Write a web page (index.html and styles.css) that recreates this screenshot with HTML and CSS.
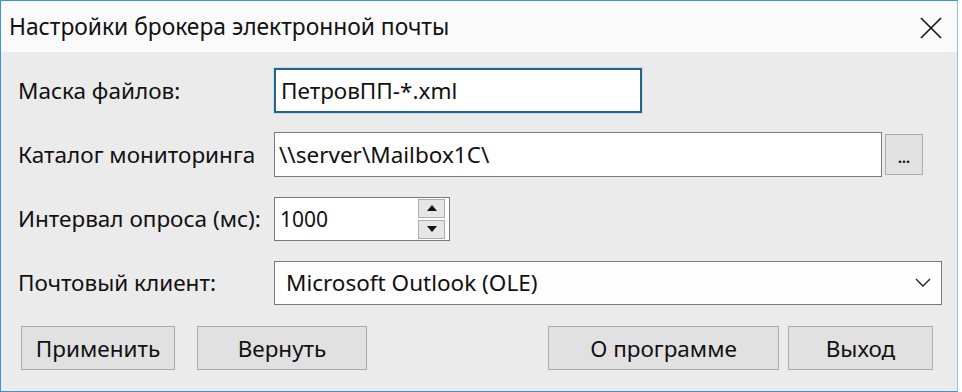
FILE: index.html
```html
<!DOCTYPE html>
<html lang="ru">
<head>
	<meta charset="utf-8">
	<title>Настройки брокера электронной почты</title>
	<link rel="stylesheet" href="styles.css">
</head>
<body>
	<div class="window">
		<!-- Title bar -->
		<div class="titlebar">
			<span class="title">Настройки брокера электронной почты</span>
			<span class="close">
				<svg width="24" height="24" viewBox="0 0 24 24"><path d="M2 2L22 22M22 2L2 22" stroke="#111" stroke-width="1.6" fill="none"/></svg>
			</span>
		</div>

		<!-- Settings -->
		<div class="content">
			<div class="form-row">
				<label>Маска файлов:</label>
				<div class="field mask focused">ПетровПП-*.xml</div>
			</div>
			<div class="form-row">
				<label>Каталог мониторинга</label>
				<div class="field folder">\\server\Mailbox1C\</div>
				<button class="browse">...</button>
			</div>
			<div class="form-row">
				<label>Интервал опроса (мс):</label>
				<div class="field spin">
					<span class="spin-value">1000</span>
					<span class="spin-buttons">
						<span class="spin-btn">
							<svg width="10" height="6" viewBox="0 0 10 6"><path d="M0 6L5 0L10 6Z" fill="#111"/></svg>
						</span>
						<span class="spin-btn">
							<svg width="10" height="6" viewBox="0 0 10 6"><path d="M0 0L5 6L10 0Z" fill="#111"/></svg>
						</span>
					</span>
				</div>
			</div>
			<div class="form-row">
				<label>Почтовый клиент:</label>
				<div class="field select">
					<span>Microsoft Outlook (OLE)</span>
					<svg width="16" height="9" viewBox="0 0 16 9"><path d="M1 1L8 8L15 1" stroke="#222" stroke-width="1.4" fill="none"/></svg>
				</div>
			</div>

			<div class="buttons">
				<button class="button apply">Применить</button>
				<button class="button revert">Вернуть</button>
				<button class="button about">О программе</button>
				<button class="button quit">Выход</button>
			</div>
		</div>
	</div>
</body>
</html>
```

FILE: styles.css
```css
html, body {
	margin: 0;
	background: #ffffff;
}

body {
	font-family: "Noto Sans", "Open Sans", sans-serif;
	color: #111;
}

.window {
	width: 958px;
	height: 392px;
	box-sizing: border-box;
	border: 1px solid #3a93d8;
	border-right-color: #8fc0e6;
	background: #ebebeb;
	display: flex;
	flex-direction: column;
}

.titlebar {
	height: 51px;
	background: #fafafa;
	display: flex;
	align-items: center;
	justify-content: space-between;
	padding: 0 14px 0 8px;
	box-sizing: border-box;
}

.title {
	font-size: 22.8px;
}

.close {
	display: flex;
	margin-top: 2px;
}

.content {
	padding: 16px 0 0 17px;
	display: flex;
	flex-direction: column;
}

.form-row {
	display: flex;
	align-items: center;
	height: 45px;
	margin-bottom: 19px;
}

.form-row label {
	width: 256px;
	font-size: 22.5px;
	flex-shrink: 0;
	white-space: nowrap;
}

.field {
	height: 45px;
	box-sizing: border-box;
	background: #ffffff;
	border: 1px solid #7a7a7a;
	font-size: 22.5px;
	display: flex;
	align-items: center;
	padding: 0 6px;
}

.mask {
	width: 368px;
}

.focused {
	border: 2px solid #2a6382;
	box-shadow: 0 0 0 1px #bfe2f3;
	padding-left: 5px;
}

.folder {
	width: 608px;
	padding-left: 4px;
}

.browse {
	width: 38px;
	height: 41px;
	margin-left: 3px;
	background: #e1e1e1;
	border: 1px solid #adadad;
	color: #111;
	font-size: 14px;
	font-weight: bold;
	padding: 6px 0 0 0;
	font-family: inherit;
}

.spin {
	width: 176px;
	height: 44px;
	justify-content: space-between;
	padding: 0 4px 0 5px;
}

.spin-value {
	font-size: 21px;
}

.spin-buttons {
	display: flex;
	flex-direction: column;
	gap: 2px;
}

.spin-btn {
	width: 27px;
	height: 19px;
	box-sizing: border-box;
	background: #e6e6e6;
	border: 1px solid #acacac;
	display: flex;
	align-items: center;
	justify-content: center;
}

.select {
	width: 668px;
	height: 44px;
	justify-content: space-between;
	padding: 0 10px 0 11px;
	background: #fefefe;
}

.buttons {
	display: flex;
	margin-top: 2px;
	padding-left: 3px;
}

.button {
	height: 44px;
	background: #e1e1e1;
	border: 1px solid #adadad;
	font-family: inherit;
	font-size: 22.5px;
	color: #111;
	padding: 0;
}

.apply {
	width: 154px;
}

.revert {
	width: 170px;
	margin-left: 22px;
}

.about {
	width: 231px;
	margin-left: 181px;
}

.quit {
	width: 145px;
	margin-left: 9px;
}
```
